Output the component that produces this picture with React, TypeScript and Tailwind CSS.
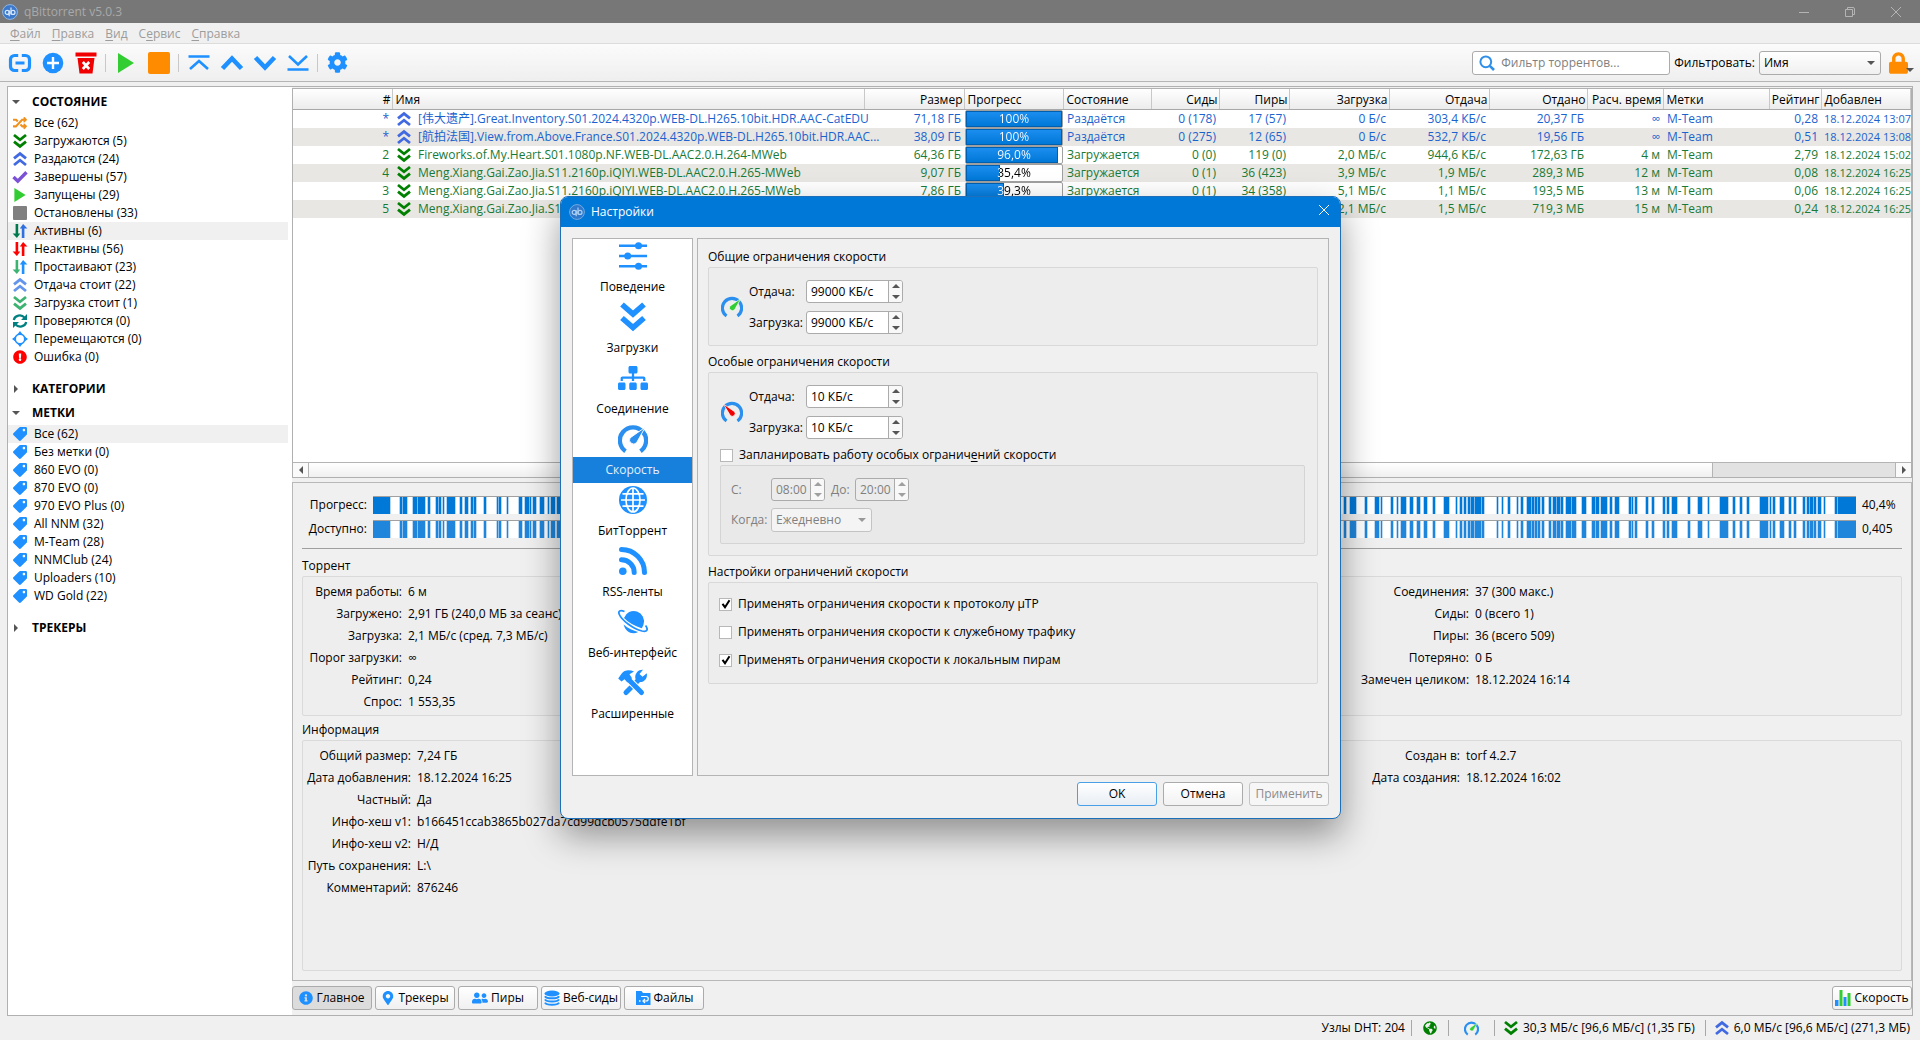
import type { ReactNode } from 'react'
import {
  FaCog,
  FaExclamationCircle,
  FaGlobeAmericas,
  FaInfoCircle,
  FaLock,
  FaMapMarkerAlt,
  FaRandom,
  FaSitemap,
  FaTag,
  FaUserFriends,
} from 'react-icons/fa'

type IconProps = { className?: string }

/* ---------- icons ---------- */

function Logo({ className }: IconProps) {
  return (
    <svg viewBox="0 0 16 16" className={className} fill="none">
      <circle cx="8" cy="8" r="7.4" fill="#3b78c9" stroke="#8fb6e6" strokeWidth="1" />
      <circle cx="5.2" cy="8.4" r="2" stroke="#d8e8fa" strokeWidth="1.2" />
      <path d="M7.2 6.2v6M9 3.6v6.8" stroke="#d8e8fa" strokeWidth="1.2" />
      <circle cx="11" cy="8.4" r="2" stroke="#d8e8fa" strokeWidth="1.2" />
    </svg>
  )
}

function DoubleChevron({ up, className }: IconProps & { up?: boolean }) {
  return (
    <svg
      viewBox="0 0 16 16"
      className={`${up ? 'rotate-180' : ''} ${className}`}
      fill="none"
      stroke="currentColor"
      strokeWidth="2.8"
    >
      <path d="M2 2l6 4.8L14 2M2 8.6l6 4.8 6-4.8" />
    </svg>
  )
}

function Arrows({ left, right }: { left: string; right: string }) {
  return (
    <svg viewBox="0 0 16 16" className="size-4">
      <path d="M3.6 1h2.6v9.500h2L4.900 15 .6 10.500h3z" fill={left} />
      <path d="M9.800 15h2.600V5.500h3L11.100 1 7.800 5.500h2z" fill={right} />
    </svg>
  )
}

function CheckMark() {
  return (
    <svg viewBox="0 0 16 16" className="size-4 text-[#7b52d6]" fill="none" stroke="currentColor" strokeWidth="3.4">
      <path d="M1.500 8l4.300 4.200L14.500 3.300" />
    </svg>
  )
}

function Sync() {
  return (
    <svg viewBox="0 0 16 16" className="size-4 text-[#008080]" fill="none" stroke="currentColor" strokeWidth="2.2">
      <path d="M1.800 7A6 5.500 0 0 1 12.500 4.600M14.200 9a6 5.500 0 0 1-10.700 2.400" />
      <path d="M15 1v6H9zM1 15V9h6z" fill="currentColor" stroke="none" />
    </svg>
  )
}

function Moving() {
  return (
    <svg viewBox="0 0 16 16" className="size-4 text-[#1e90ff]" fill="none" stroke="currentColor">
      <circle cx="8" cy="8" r="4.800" strokeWidth="1.700" />
      <path d="M8 0l2.600 3.400H5.400zM8 16l2.600-3.400H5.400zM0 8l3.400-2.600v5.200zM16 8l-3.400-2.600v5.200z" fill="currentColor" stroke="none" />
    </svg>
  )
}

function Play({ className }: IconProps) {
  return (
    <svg viewBox="0 0 16 20" className={className} fill="currentColor">
      <path d="M0 0l16 10L0 20z" />
    </svg>
  )
}

function LinkIcon() {
  return (
    <svg viewBox="0 0 24 24" className="size-6 text-[#1e90ff]" fill="none" stroke="currentColor" strokeWidth="3.200">
      <path d="M10.200 4.500H6.500a4 4 0 0 0-4 4v7a4 4 0 0 0 4 4h3.700M13.800 4.500h3.700a4 4 0 0 1 4 4v7a4 4 0 0 1-4 4h-3.700M7.500 12h9" />
    </svg>
  )
}

function AddIcon() {
  return (
    <svg viewBox="0 0 24 24" className="size-6">
      <circle cx="12" cy="12" r="10.300" fill="#1e90ff" />
      <path d="M12 6v12M6 12h12" stroke="#fff" strokeWidth="2.400" />
    </svg>
  )
}

function TrashIcon() {
  return (
    <svg viewBox="0 0 24 24" className="size-6">
      <path d="M1.500 1.500h21v4h-21zM3.500 7h17l-2 15.500h-13z" fill="#f00000" />
      <path d="M8.800 11l6.400 7M15.200 11l-6.400 7" stroke="#fff" strokeWidth="2.600" />
    </svg>
  )
}

function QueueIcon({ kind }: { kind: 'top' | 'up' | 'down' | 'bottom' }) {
  const paths = {
    top: 'M1.500 5.500h21M3 18l9-8 9 8',
    up: 'M2.500 17.500L12 7.500l9.500 10',
    down: 'M2.500 6.500L12 16.500l9.500-10',
    bottom: 'M1.500 18.500h21M3 5l9 8.500L21 5',
  }
  const heavy = kind === 'up' || kind === 'down'

  return (
    <svg viewBox="0 0 24 24" className="size-6 text-[#1e90ff]" fill="none" stroke="currentColor" strokeWidth={heavy ? 4.6 : 2.6}>
      <path d={paths[kind]} />
    </svg>
  )
}

function SearchIcon() {
  return (
    <svg viewBox="0 0 16 16" className="size-4 shrink-0 text-[#2f8fe8]" fill="none" stroke="currentColor">
      <circle cx="6.800" cy="6.800" r="5.400" strokeWidth="2" />
      <path d="M10.800 10.800l4.200 4.200" strokeWidth="2.600" />
    </svg>
  )
}

function Gauge({ needle, low, className }: IconProps & { needle: string; low?: boolean }) {
  return (
    <svg viewBox="0 0 32 32" className={className}>
      <path d="M8 29A14 14 0 1 1 24 29" fill="none" stroke="#2a8fef" strokeWidth="4.600" />
      <path
        d={low ? 'M3.500 4.500L19.800 15.500a4.200 4.200 0 0 1-6.200 5.600z' : 'M29 3.500L19.800 20a4.400 4.400 0 0 1-7-5.200z'}
        fill={needle}
        stroke="#fff"
        strokeWidth="1"
      />
    </svg>
  )
}

function Sliders() {
  return (
    <svg viewBox="0 0 32 32" className="size-8 text-[#1e90ff]" fill="currentColor">
      <path d="M2 4.500h28v2.400H2zM2 14.800h28v2.400H2zM2 25h28v2.400H2z" />
      <circle cx="21.500" cy="5.700" r="3.500" />
      <circle cx="10.700" cy="16" r="3.500" />
      <circle cx="21.500" cy="26.200" r="3.500" />
    </svg>
  )
}

function DownloadsIcon() {
  return (
    <svg viewBox="0 0 32 32" className="size-8 text-[#1e90ff]" fill="none" stroke="currentColor" strokeWidth="5.600">
      <path d="M5 3.500l11 9.500 11-9.500M5 17l11 9.500L27 17" />
    </svg>
  )
}

function GridGlobe() {
  return (
    <svg viewBox="0 0 32 32" className="size-8" fill="none" stroke="#fff" strokeWidth="1.700">
      <circle cx="16" cy="16" r="14" fill="#1e90ff" stroke="none" />
      <ellipse cx="16" cy="16" rx="7" ry="12" />
      <path d="M16 4v24M4 16h24M5.500 9.800h21M5.500 22.200h21" />
    </svg>
  )
}

function RssIcon() {
  return (
    <svg viewBox="0 0 32 32" className="size-8 text-[#1e90ff]" fill="none" stroke="currentColor" strokeWidth="5" strokeLinecap="round">
      <circle cx="5.800" cy="26.200" r="3.800" fill="currentColor" stroke="none" />
      <path d="M4.500 14.800A12.700 12.700 0 0 1 17.200 27.500M4.500 4.500a23 23 0 0 1 23 23" />
    </svg>
  )
}

function Planet() {
  return (
    <svg viewBox="0 0 32 32" className="size-8 text-[#1e90ff]" fill="none">
      <path d="M7 12a10 10 0 0 1 19.500 6.500c-.5 1.700-1 2.500-1.900 3.800C17.500 20 11.500 16.500 7 12zM6.600 18.600c4.600 4 9.500 6.200 14.500 7.400-5.500 3.200-12.600.4-14.500-7.400z" fill="currentColor" />
      <path d="M7.500 5.500C3 3.500 1 5 2.200 8.200 4.500 14 16 22.800 25 25c5.500 1.200 6.500-1.500 3.600-5.500" stroke="currentColor" strokeWidth="1.700" />
    </svg>
  )
}

function ToolsIcon() {
  return (
    <svg viewBox="0 0 32 32" className="size-8" fill="none">
      <path d="M9 25.500L22 12.500" stroke="#1e90ff" strokeWidth="5" strokeLinecap="round" />
      <path d="M29.800 6.200l-4.300 3.600-3-2.700 3.500-4.300a7.200 7.200 0 0 0-7.500 9.200l3.500 3c5 .8 8.800-3.600 7.800-8.800z" fill="#1e90ff" />
      <path d="M11.500 12.500L24.500 25.500" stroke="#fff" strokeWidth="7" strokeLinecap="round" />
      <path d="M11.500 12.500L24.500 25.500" stroke="#1e90ff" strokeWidth="5" strokeLinecap="round" />
      <path d="M1.200 11.500l3.500-5C7.500 3 12 2.500 17 4.500l-4.500 2.700 2.500 4-4.500 4.300-3-3.200-3 2.200z" fill="#1e90ff" />
    </svg>
  )
}

function DatabaseIcon() {
  return (
    <svg viewBox="0 0 16 16" className="size-4 text-[#1e90ff]" fill="none" stroke="currentColor">
      <ellipse cx="8" cy="3.500" rx="7.500" ry="3" fill="currentColor" stroke="none" />
      <path d="M1 6.200c1.500 2.800 12.500 2.800 14 0M1 9.400c1.500 2.800 12.500 2.800 14 0M1 12.600c1.500 2.800 12.500 2.800 14 0" strokeWidth="2" />
    </svg>
  )
}

function FilesIcon() {
  return (
    <svg viewBox="0 0 16 16" className="size-4" fill="none">
      <path d="M1 1h5.500l1.500 2h7.500v12H1z" fill="#1e90ff" />
      <path d="M6 6.500h5a2 2 0 0 1 0 4.500H8.500M10 9L8 11l2 2" stroke="#fff" strokeWidth="1.200" />
      <path d="M4 10.300h1.500v1.500H4z" fill="#fff" />
    </svg>
  )
}

function SpeedBars() {
  return (
    <svg viewBox="0 0 16 16" className="size-4">
      <path d="M0 10h3.500v6H0z" fill="#1e90ff" />
      <path d="M4.500 0h3v16h-3z" fill="#32cd32" />
      <path d="M8.500 7h3v9h-3z" fill="#1e90ff" />
      <path d="M12.500 3h3v13h-3z" fill="#32cd32" />
    </svg>
  )
}

function Caret({ dir = 'down', className = 'text-[#555]' }: IconProps & { dir?: 'down' | 'up' | 'left' | 'right' }) {
  const paths = {
    down: 'M0 2h8L4 6z',
    up: 'M0 6h8L4 2z',
    left: 'M6 0v8L2 4z',
    right: 'M2 0v8l4-4z',
  }

  return (
    <svg viewBox="0 0 8 8" className={`size-2 ${className}`} fill="currentColor">
      <path d={paths[dir]} />
    </svg>
  )
}

/* ---------- data ---------- */

const statusFilters: { label: string; icon: ReactNode; active?: boolean }[] = [
  { label: 'Все (62)', icon: <FaRandom className="size-3.5 text-[#f0901e]" /> },
  { label: 'Загружаются (5)', icon: <DoubleChevron className="size-4 text-[#008000]" /> },
  { label: 'Раздаются (24)', icon: <DoubleChevron up className="size-4 text-[#4169e1]" /> },
  { label: 'Завершены (57)', icon: <CheckMark /> },
  { label: 'Запущены (29)', icon: <Play className="h-3.5 w-3 text-[#32cd32]" /> },
  { label: 'Остановлены (33)', icon: <span className="size-3.5 rounded-[1px] bg-[#808080]" /> },
  { label: 'Активны (6)', icon: <Arrows left="#007a4d" right="#2f6fe0" />, active: true },
  { label: 'Неактивны (56)', icon: <Arrows left="#ff0000" right="#ff0000" /> },
  { label: 'Простаивают (23)', icon: <Arrows left="#3cb371" right="#1e90ff" /> },
  { label: 'Отдача стоит (22)', icon: <DoubleChevron up className="size-4 text-[#6495ed]" /> },
  { label: 'Загрузка стоит (1)', icon: <DoubleChevron className="size-4 text-[#3cb371]" /> },
  { label: 'Проверяются (0)', icon: <Sync /> },
  { label: 'Перемещаются (0)', icon: <Moving /> },
  { label: 'Ошибка (0)', icon: <FaExclamationCircle className="size-3.5 text-[#ff0000]" /> },
]

const tags = [
  'Все (62)',
  'Без метки (0)',
  '860 EVO (0)',
  '870 EVO (0)',
  '970 EVO Plus (0)',
  'All NNM (32)',
  'M-Team (28)',
  'NNMClub (24)',
  'Uploaders (10)',
  'WD Gold (22)',
]

type Column = { title: string; width?: string; right?: boolean }

const columns: Column[] = [
  { title: '#', width: 'w-[99px]', right: true },
  { title: 'Имя', width: 'w-[472px]' },
  { title: 'Размер', width: 'w-[100px]', right: true },
  { title: 'Прогресс', width: 'w-[99px]' },
  { title: 'Состояние', width: 'w-[88px]' },
  { title: 'Сиды', width: 'w-[68px]', right: true },
  { title: 'Пиры', width: 'w-[70px]', right: true },
  { title: 'Загрузка', width: 'w-[100px]', right: true },
  { title: 'Отдача', width: 'w-[100px]', right: true },
  { title: 'Отдано', width: 'w-[98px]', right: true },
  { title: 'Расч. время', width: 'w-[76px]', right: true },
  { title: 'Метки', width: 'w-[106px]' },
  { title: 'Рейтинг', width: 'w-[52px]', right: true },
  { title: 'Добавлен' },
]

type Torrent = {
  pos: string
  name: string
  size: string
  progress: number
  progressText: string
  seeds: string
  peers: string
  down: string
  up: string
  uploaded: string
  eta: string
  ratio: string
  added: string
}

const torrents: Torrent[] = [
  { pos: '*', name: '[伟大遗产].Great.Inventory.S01.2024.4320p.WEB-DL.H265.10bit.HDR.AAC-CatEDU', size: '71,18 ГБ', progress: 100, progressText: '100%', seeds: '0 (178)', peers: '17 (57)', down: '0 Б/с', up: '303,4 КБ/с', uploaded: '20,37 ГБ', eta: '∞', ratio: '0,28', added: '18.12.2024 13:07' },
  { pos: '*', name: '[航拍法国].View.from.Above.France.S01.2024.4320p.WEB-DL.H265.10bit.HDR.AAC...', size: '38,09 ГБ', progress: 100, progressText: '100%', seeds: '0 (275)', peers: '12 (65)', down: '0 Б/с', up: '532,7 КБ/с', uploaded: '19,56 ГБ', eta: '∞', ratio: '0,51', added: '18.12.2024 13:08' },
  { pos: '2', name: 'Fireworks.of.My.Heart.S01.1080p.NF.WEB-DL.AAC2.0.H.264-MWeb', size: '64,36 ГБ', progress: 96, progressText: '96,0%', seeds: '0 (0)', peers: '119 (0)', down: '2,0 МБ/с', up: '944,6 КБ/с', uploaded: '172,63 ГБ', eta: '4 м', ratio: '2,79', added: '18.12.2024 15:02' },
  { pos: '4', name: 'Meng.Xiang.Gai.Zao.Jia.S11.2160p.iQIYI.WEB-DL.AAC2.0.H.265-MWeb', size: '9,07 ГБ', progress: 35.4, progressText: '35,4%', seeds: '0 (1)', peers: '36 (423)', down: '3,9 МБ/с', up: '1,9 МБ/с', uploaded: '289,3 МБ', eta: '12 м', ratio: '0,08', added: '18.12.2024 16:25' },
  { pos: '3', name: 'Meng.Xiang.Gai.Zao.Jia.S11.2160p.iQIYI.WEB-DL.AAC2.0.H.265-MWeb', size: '7,86 ГБ', progress: 39.3, progressText: '39,3%', seeds: '0 (1)', peers: '34 (358)', down: '5,1 МБ/с', up: '1,1 МБ/с', uploaded: '193,5 МБ', eta: '13 м', ratio: '0,06', added: '18.12.2024 16:25' },
  { pos: '5', name: 'Meng.Xiang.Gai.Zao.Jia.S11.2160p.iQIYI.WEB-DL.AAC2.0.H.265-MWeb', size: '7,24 ГБ', progress: 40.4, progressText: '40,4%', seeds: '0 (1)', peers: '36 (509)', down: '2,1 МБ/с', up: '1,5 МБ/с', uploaded: '719,3 МБ', eta: '15 м', ratio: '0,24', added: '18.12.2024 16:25' },
]

// [start, end] of every run of finished pieces
const pieces = [
  [0, 17], [27, 29], [30, 34], [40, 44], [45, 52], [55, 57], [63, 65], [66, 68], [70, 71], [74, 82], [87, 89],
  [92, 95], [98, 100], [101, 103], [111, 113], [124, 125], [126, 128], [134, 135], [146, 149], [152, 156],
  [157, 158], [160, 163], [167, 171], [175, 176], [178, 182], [184, 187],
  [971, 973], [977, 983], [992, 994], [1002, 1006], [1008, 1009], [1018, 1020], [1024, 1025], [1028, 1033],
  [1037, 1040], [1044, 1047], [1051, 1054], [1060, 1062], [1071, 1076], [1083, 1084], [1087, 1089], [1091, 1093],
  [1095, 1097], [1098, 1101], [1102, 1108], [1109, 1111], [1124, 1125], [1129, 1130], [1135, 1137], [1144, 1145],
  [1148, 1150], [1154, 1158], [1159, 1161], [1162, 1164], [1165, 1167], [1169, 1171], [1176, 1178], [1180, 1183],
  [1184, 1187], [1188, 1190], [1193, 1198], [1199, 1203], [1209, 1213], [1219, 1222], [1223, 1226], [1228, 1234],
  [1237, 1239], [1242, 1246], [1256, 1258], [1259, 1260], [1262, 1264], [1273, 1275], [1279, 1281], [1290, 1292],
  [1294, 1296], [1299, 1304], [1315, 1317], [1325, 1329], [1335, 1336], [1347, 1355], [1360, 1362], [1367, 1369],
  [1374, 1376], [1387, 1395], [1397, 1398], [1400, 1402], [1407, 1411], [1416, 1418], [1421, 1423], [1430, 1432],
  [1434, 1436], [1437, 1440], [1441, 1443], [1445, 1448], [1451, 1452], [1462, 1464], [1465, 1483],
]

const settingsPages: { label: string; icon: ReactNode; active?: boolean }[] = [
  { label: 'Поведение', icon: <Sliders /> },
  { label: 'Загрузки', icon: <DownloadsIcon /> },
  { label: 'Соединение', icon: <FaSitemap className="size-[30px] text-[#1e90ff]" /> },
  { label: 'Скорость', icon: <Gauge needle="#2a8fef" className="size-[30px]" />, active: true },
  { label: 'БитТоррент', icon: <GridGlobe /> },
  { label: 'RSS-ленты', icon: <RssIcon /> },
  { label: 'Веб-интерфейс', icon: <Planet /> },
  { label: 'Расширенные', icon: <ToolsIcon /> },
]

/* ---------- main window ---------- */

function TitleBar() {
  return (
    <header className="flex h-[23px] items-center bg-[#777] pl-0.5 text-[#a9a9a9]">
      <Logo className="size-4" />
      <h1 className="ml-1.5 flex-1">qBittorrent v5.0.3</h1>
      <div className="flex h-full items-center text-[#b4b4b4]">
        <button type="button" aria-label="Свернуть" className="flex w-[46px] justify-center">
          <svg viewBox="0 0 10 10" className="size-2.5" stroke="currentColor"><path d="M0 5.500h10" /></svg>
        </button>
        <button type="button" aria-label="Развернуть" className="flex w-[45px] justify-center">
          <svg viewBox="0 0 10 10" className="size-2.5" fill="none" stroke="currentColor">
            <path d="M.5 2.500h7v7h-7zM2.500 2.500v-2h5.500a1.500 1.500 0 0 1 1.500 1.500v5.500h-2" />
          </svg>
        </button>
        <button type="button" aria-label="Закрыть" className="flex w-12 justify-center">
          <svg viewBox="0 0 10 10" className="size-2.5" stroke="currentColor"><path d="M0 0l10 10M10 0L0 10" /></svg>
        </button>
      </div>
    </header>
  )
}

function MenuBar() {
  const items = [
    ['', 'Ф', 'айл'],
    ['', 'П', 'равка'],
    ['', 'В', 'ид'],
    ['С', 'е', 'рвис'],
    ['', 'С', 'правка'],
  ]

  return (
    <nav className="flex h-[21px] items-center gap-[11px] border-b border-[#dcdcdc] bg-[#f0f0f0] pt-px pl-2.5 text-[#9c9c9c]">
      {items.map(([before, key, after]) => (
        <button key={key + after} type="button">
          {before}
          <span className="underline underline-offset-2">{key}</span>
          {after}
        </button>
      ))}
    </nav>
  )
}

function ToolButton({ label, children }: { label: string; children: ReactNode }) {
  return (
    <button type="button" aria-label={label} className="flex w-[33px] items-center justify-center">
      {children}
    </button>
  )
}

function ToolSeparator() {
  return <span className="mx-[3px] h-[18px] w-px bg-[#c8c8c8]" />
}

function Toolbar() {
  return (
    <div className="flex h-[38px] items-center border-b border-[#b4b4b4] bg-linear-to-b from-[#fbfbfb] to-[#efefef] pl-[3px]">
      <ToolButton label="Добавить ссылку"><LinkIcon /></ToolButton>
      <ToolButton label="Добавить торрент"><AddIcon /></ToolButton>
      <ToolButton label="Удалить"><TrashIcon /></ToolButton>
      <ToolSeparator />
      <ToolButton label="Запустить"><Play className="h-5 w-[18px] text-[#32cd32]" /></ToolButton>
      <ToolButton label="Остановить"><span className="size-[22px] rounded-xs bg-[#ff8c00]" /></ToolButton>
      <ToolSeparator />
      <ToolButton label="В начало"><QueueIcon kind="top" /></ToolButton>
      <ToolButton label="Выше"><QueueIcon kind="up" /></ToolButton>
      <ToolButton label="Ниже"><QueueIcon kind="down" /></ToolButton>
      <ToolButton label="В конец"><QueueIcon kind="bottom" /></ToolButton>
      <ToolSeparator />
      <ToolButton label="Настройки"><FaCog className="size-[21px] text-[#1e90ff]" /></ToolButton>

      <div className="ml-auto flex h-6 w-[198px] items-center rounded-[3px] border border-[#ababab] bg-white pl-1.5">
        <SearchIcon />
        <input
          type="text"
          aria-label="Фильтр торрентов"
          placeholder="Фильтр торрентов..."
          className="ml-1.5 w-full min-w-0 bg-transparent outline-none placeholder:text-[#808080]"
        />
      </div>
      <label htmlFor="filter-by" className="mx-1 whitespace-nowrap">Фильтровать:</label>
      <div className="relative">
        <select
          id="filter-by"
          className="h-6 w-[122px] appearance-none rounded-[3px] border border-[#ababab] bg-linear-to-b from-white to-[#f0f0f0] pl-1"
        >
          <option>Имя</option>
        </select>
        <Caret className="pointer-events-none absolute top-2 right-1.5 text-[#555]" />
      </div>
      <button type="button" aria-label="Заблокировать" className="mr-1.5 ml-2 flex items-end">
        <FaLock className="h-[22px] w-[19px] text-[#ff8c00]" />
        <Caret className="-ml-0.5 size-1.5 text-[#555]" />
      </button>
    </div>
  )
}

function SidebarHeading({ open, children }: { open?: boolean; children: string }) {
  return (
    <button type="button" className="flex h-6 w-full items-center gap-3 pt-px pl-1 font-bold">
      <Caret dir={open ? 'down' : 'right'} />
      {children}
    </button>
  )
}

function SidebarItem({ icon, active, children }: { icon: ReactNode; active?: boolean; children: string }) {
  return (
    <li>
      <button type="button" className={`flex h-[18px] w-full items-center gap-1.5 pl-1 ${active ? 'bg-[#f0f0f0]' : ''}`}>
        <span className="flex size-4 items-center justify-center">{icon}</span>
        {children}
      </button>
    </li>
  )
}

function Sidebar() {
  return (
    <aside className="w-[284px] shrink-0 bg-white pt-0.5 pr-1">
      <SidebarHeading open>СОСТОЯНИЕ</SidebarHeading>
      <ul className="pt-px">
        {statusFilters.map((f) => (
          <SidebarItem key={f.label} icon={f.icon} active={f.active}>{f.label}</SidebarItem>
        ))}
      </ul>
      <div className="pt-2.5">
        <SidebarHeading>КАТЕГОРИИ</SidebarHeading>
        <SidebarHeading open>МЕТКИ</SidebarHeading>
      </div>
      <ul className="pt-px">
        {tags.map((tag, i) => (
          <SidebarItem key={tag} icon={<FaTag className="size-3.5 -scale-x-100 text-[#1e90ff]" />} active={i === 0}>
            {tag}
          </SidebarItem>
        ))}
      </ul>
      <div className="pt-2.5">
        <SidebarHeading>ТРЕКЕРЫ</SidebarHeading>
      </div>
    </aside>
  )
}

function ProgressCell({ value, text }: { value: number; text: string }) {
  return (
    <div className="ml-px h-[18px] rounded-[2px] border border-[#a0a0a0] bg-white">
      <div
        className="h-full border border-[#005fae] bg-linear-to-b from-[#1a8ef0] to-[#0078d7]"
        style={{ width: `${value}%` }}
      />
      <div
        className="-mt-4 bg-clip-text text-center leading-4 text-transparent"
        style={{ backgroundImage: `linear-gradient(to right, #fff ${value}%, #000 ${value}%)` }}
      >
        {text}
      </div>
    </div>
  )
}

function TorrentTable() {
  return (
    <table className="w-full table-fixed border-collapse whitespace-nowrap">
      <thead>
        <tr className="h-5 bg-linear-to-b from-white to-[#ececec]">
          {columns.map((c) => (
            <th
              key={c.title}
              className={`border-r border-b border-r-[#c8c8c8] border-b-[#a8a8a8] p-0 pt-0.5 font-normal ${c.width ?? ''} ${
                c.right ? 'pr-px text-right' : 'pl-[3px] text-left'
              }`}
            >
              {c.title}
            </th>
          ))}
        </tr>
      </thead>
      <tbody>
        {torrents.map((t, i) => {
          const seeding = t.progress === 100

          return (
            <tr
              key={i}
              className={`h-[18px] leading-[18px] ${i % 2 ? 'bg-[#e9e7e3]' : 'bg-white'} ${
                seeding ? 'text-[#1a63cf]' : 'text-[#187a36]'
              }`}
            >
              <td className="p-0 pr-[3px] text-right">{t.pos}</td>
              <td className="p-0 pl-1">
                <div className="flex items-center gap-1.5">
                  <DoubleChevron
                    up={seeding}
                    className={`size-4 shrink-0 ${seeding ? 'text-[#4169e1]' : 'text-[#008000]'}`}
                  />
                  <span>{t.name}</span>
                </div>
              </td>
              <td className="p-0 pr-[3px] text-right">{t.size}</td>
              <td className="p-0"><ProgressCell value={t.progress} text={t.progressText} /></td>
              <td className="p-0 pl-1">{seeding ? 'Раздаётся' : 'Загружается'}</td>
              <td className="p-0 pr-[3px] text-right">{t.seeds}</td>
              <td className="p-0 pr-[3px] text-right">{t.peers}</td>
              <td className="p-0 pr-[3px] text-right">{t.down}</td>
              <td className="p-0 pr-[3px] text-right">{t.up}</td>
              <td className="p-0 pr-[3px] text-right">{t.uploaded}</td>
              <td className="p-0 pr-[3px] text-right">{t.eta}</td>
              <td className="p-0 pl-1">M-Team</td>
              <td className="p-0 pr-[3px] text-right">{t.ratio}</td>
              <td className="p-0 pl-[3px] text-[11px]">{t.added}</td>
            </tr>
          )
        })}
      </tbody>
    </table>
  )
}

function TransferList() {
  return (
    <section className="flex h-[390px] shrink-0 flex-col border border-[#b0b0b0] bg-white">
      <div className="flex-1 overflow-hidden">
        <TorrentTable />
      </div>
      <div className="flex h-[15px] border-t border-[#b4b4b4] bg-[#e2e2e2]">
        <button type="button" aria-label="Влево" className="flex w-4 items-center justify-center border-r border-[#b4b4b4] bg-[#fafafa]">
          <Caret dir="left" />
        </button>
        <div className="flex-1">
          <div className="h-full w-[88.5%] border-r border-[#b4b4b4] bg-linear-to-b from-white to-[#f0f0f0]" />
        </div>
        <button type="button" aria-label="Вправо" className="flex w-4 items-center justify-center border-l border-[#b4b4b4] bg-[#fafafa]">
          <Caret dir="right" />
        </button>
      </div>
    </section>
  )
}

function PieceBar({ label, value, fill }: { label: string; value: string; fill: string }) {
  return (
    <div className="flex h-[18px] items-center gap-1.5">
      <span className="w-[65px] text-right">{label}</span>
      <svg viewBox="0 0 1483 18" preserveAspectRatio="none" className="h-[18px] min-w-0 flex-1" fill={fill} shapeRendering="crispEdges">
        <path d="M0 0h1483v18H0z" fill="#fff" />
        {pieces.map(([start, end]) => (
          <g key={start}>
            <rect x={start - 1} y="1" width={end - start + 2} height="17" opacity="0.3" />
            <rect x={start} y="1" width={end - start} height="17" />
          </g>
        ))}
        <path d="M0 0h1483v1H0z" fill="#a0a0a0" />
      </svg>
      <span className="w-10">{value}</span>
    </div>
  )
}

function InfoColumn({ rows, labelWidth }: { rows: string[][]; labelWidth: string }) {
  return (
    <dl className="min-w-0 leading-[22px]">
      {rows.map(([label, value]) => (
        <div key={label} className="flex gap-1.5 whitespace-nowrap">
          <dt className={`text-right ${labelWidth}`}>{label}</dt>
          <dd>{value}</dd>
        </div>
      ))}
    </dl>
  )
}

function DetailsPanel() {
  return (
    <section className="mt-1 flex flex-1 flex-col border border-[#b8b8b8] bg-[#f0f0f0] px-[9px] pt-[13px] pb-[9px]">
      <div className="flex flex-col gap-1.5">
        <PieceBar label="Прогресс:" value="40,4%" fill="#0078d7" />
        <PieceBar label="Доступно:" value="0,405" fill="#2086db" />
      </div>
      <hr className="mt-2.5 border-[#a0a0a0]" />
      <h2 className="mt-[7px] h-5 leading-5">Торрент</h2>
      <div className="grid h-[140px] grid-cols-[1058px_1fr] rounded-xs border border-[#dadada] bg-[#eeeeee] pt-1">
        <InfoColumn
          labelWidth="w-[99px]"
          rows={[
            ['Время работы:', '6 м'],
            ['Загружено:', '2,91 ГБ (240,0 МБ за сеанс)'],
            ['Загрузка:', '2,1 МБ/с (сред. 7,3 МБ/с)'],
            ['Порог загрузки:', '∞'],
            ['Рейтинг:', '0,24'],
            ['Спрос:', '1 553,35'],
          ]}
        />
        <InfoColumn
          labelWidth="w-[108px]"
          rows={[
            ['Соединения:', '37 (300 макс.)'],
            ['Сиды:', '0 (всего 1)'],
            ['Пиры:', '36 (всего 509)'],
            ['Потеряно:', '0 Б'],
            ['Замечен целиком:', '18.12.2024 16:14'],
          ]}
        />
      </div>
      <h2 className="mt-1 h-5 leading-5">Информация</h2>
      <div className="grid flex-1 grid-cols-[1058px_1fr] rounded-xs border border-[#dadada] bg-[#eeeeee] pt-1">
        <InfoColumn
          labelWidth="w-[108px]"
          rows={[
            ['Общий размер:', '7,24 ГБ'],
            ['Дата добавления:', '18.12.2024 16:25'],
            ['Частный:', 'Да'],
            ['Инфо-хеш v1:', 'b166451ccab3865b027da7cd99dcb0575ddfe1bf'],
            ['Инфо-хеш v2:', 'Н/Д'],
            ['Путь сохранения:', 'L:\\'],
            ['Комментарий:', '876246'],
          ]}
        />
        <InfoColumn
          labelWidth="w-[99px]"
          rows={[
            ['Создан в:', 'torf 4.2.7'],
            ['Дата создания:', '18.12.2024 16:02'],
          ]}
        />
      </div>
    </section>
  )
}

function TabButton({ icon, active, children }: { icon: ReactNode; active?: boolean; children: string }) {
  return (
    <button
      type="button"
      className={`flex h-6 w-20 items-center justify-center gap-[3px] rounded-[3px] border border-[#ababab] whitespace-nowrap ${
        active ? 'bg-[#dcdcdc]' : 'bg-linear-to-b from-white to-[#f0f0f0]'
      }`}
    >
      {icon}
      {children}
    </button>
  )
}

function DetailsTabs() {
  return (
    <div className="flex h-[34px] items-center gap-[3px]">
      <TabButton active icon={<FaInfoCircle className="size-3.5 text-[#1e90ff]" />}>Главное</TabButton>
      <TabButton icon={<FaMapMarkerAlt className="size-3.5 text-[#1e90ff]" />}>Трекеры</TabButton>
      <TabButton icon={<FaUserFriends className="size-4 text-[#1e90ff]" />}>Пиры</TabButton>
      <TabButton icon={<DatabaseIcon />}>Веб-сиды</TabButton>
      <TabButton icon={<FilesIcon />}>Файлы</TabButton>
      <div className="ml-auto">
        <TabButton icon={<SpeedBars />}>Скорость</TabButton>
      </div>
    </div>
  )
}

function StatusBar() {
  const separator = <span className="h-4 w-px bg-[#a8a8a8]" />

  return (
    <footer className="flex h-6 items-center justify-end bg-[#f0f0f0] pr-2.5 whitespace-nowrap">
      <span className="mr-1.5">Узлы DHT: 204</span>
      {separator}
      <FaGlobeAmericas className="mx-[11px] size-3.5 text-[#008000]" />
      {separator}
      <Gauge needle="#32cd32" className="mx-[15px] size-[15px]" />
      {separator}
      <DoubleChevron className="ml-2 size-4 text-[#008000]" />
      <span className="mr-2.5 ml-1">30,3 МБ/с [96,6 МБ/с] (1,35 ГБ)</span>
      {separator}
      <DoubleChevron up className="ml-2 size-4 text-[#4169e1]" />
      <span className="ml-1">6,0 МБ/с [96,6 МБ/с] (271,3 МБ)</span>
    </footer>
  )
}

/* ---------- settings dialog ---------- */

type SpinProps = { id: string; value: string; width: string; disabled?: boolean }

function SpinBox({ id, value, width, disabled }: SpinProps) {
  const caret = disabled ? 'text-[#a0a0a0]' : 'text-[#555]'

  return (
    <div
      className={`flex h-[23px] overflow-hidden rounded-[3px] border border-[#ababab] ${width} ${
        disabled ? 'bg-[#ececec] text-[#808080]' : 'bg-white'
      }`}
    >
      <input id={id} type="text" defaultValue={value} disabled={disabled} className="min-w-0 flex-1 pl-1 outline-none" />
      <div className="flex w-3.5 shrink-0 flex-col border-l border-[#ababab] bg-[#f8f8f8]">
        <button type="button" aria-label="Больше" disabled={disabled} className="flex flex-1 items-center justify-center">
          <Caret dir="up" className={caret} />
        </button>
        <button type="button" aria-label="Меньше" disabled={disabled} className="flex flex-1 items-center justify-center">
          <Caret className={caret} />
        </button>
      </div>
    </div>
  )
}

function CheckBox({ checked, children }: { checked?: boolean; children: ReactNode }) {
  return (
    <label className="flex h-5 w-fit items-center gap-1.5 whitespace-nowrap">
      <span className="grid size-[13px] place-items-center">
        <input
          type="checkbox"
          defaultChecked={checked}
          className="peer col-start-1 row-start-1 size-[13px] appearance-none border border-[#b8b8b8] bg-white"
        />
        <svg
          viewBox="0 0 12 12"
          className="pointer-events-none invisible col-start-1 row-start-1 size-3 peer-checked:visible"
          fill="none"
          stroke="#000"
          strokeWidth="2"
        >
          <path d="M2.500 5.800l2.500 3.400 4.500-7" />
        </svg>
      </span>
      <span>{children}</span>
    </label>
  )
}

function SpeedLimits({ prefix, value, gauge }: { prefix: string; value: string; gauge: ReactNode }) {
  return (
    <div className="flex items-center gap-1.5 pl-3">
      {gauge}
      <div className="grid grid-cols-[57px_97px] items-center gap-y-2">
        <label htmlFor={`${prefix}-up`}>Отдача:</label>
        <SpinBox id={`${prefix}-up`} value={value} width="w-[97px]" />
        <label htmlFor={`${prefix}-down`}>Загрузка:</label>
        <SpinBox id={`${prefix}-down`} value={value} width="w-[97px]" />
      </div>
    </div>
  )
}

function GroupBox({ title, className, children }: { title: string; className: string; children: ReactNode }) {
  return (
    <fieldset>
      <legend className="h-5 leading-5">{title}</legend>
      <div className={`rounded-xs border border-[#d8d8d8] bg-[#ededed] ${className}`}>{children}</div>
    </fieldset>
  )
}

function SettingsNav() {
  return (
    <nav className="w-[121px] border border-[#b4b4b4] bg-white">
      {settingsPages.map((page) => (
        <button key={page.label} type="button" className="block w-full text-center">
          <span className="flex h-[35px] items-center justify-center pb-0.5">{page.icon}</span>
          <span className={`block h-[26px] leading-[26px] ${page.active ? 'bg-[#1680dc] text-[#e4f1fc]' : ''}`}>
            {page.label}
          </span>
        </button>
      ))}
    </nav>
  )
}

function SpeedPage() {
  return (
    <div className="flex flex-1 flex-col gap-1.5 border border-[#b4b4b4] px-2.5 pt-2">
      <GroupBox title="Общие ограничения скорости" className="h-[79px] pt-3">
        <SpeedLimits prefix="global" value="99000 КБ/с" gauge={<Gauge needle="#32cd32" className="size-[22px]" />} />
      </GroupBox>

      <GroupBox title="Особые ограничения скорости" className="h-[184px] pt-3">
        <SpeedLimits prefix="alt" value="10 КБ/с" gauge={<Gauge low needle="#f00000" className="size-[22px]" />} />
        <div className="mt-1.5 pr-3 pl-[11px]">
          <CheckBox>
            Запланировать работу особых огранич<span className="underline underline-offset-2">е</span>ний скорости
          </CheckBox>
          <div className="grid h-[79px] grid-cols-[40px_1fr] content-start items-center gap-y-[7px] rounded-xs border border-[#d4d4d4] bg-[#e9e9e9] pt-3 pl-2.5 text-[#808080]">
            <label htmlFor="time-from">С:</label>
            <div className="flex items-center gap-1.5">
              <SpinBox id="time-from" value="08:00" width="w-[54px]" disabled />
              <label htmlFor="time-to" className="w-[18px] whitespace-nowrap">До:</label>
              <SpinBox id="time-to" value="20:00" width="w-[54px]" disabled />
            </div>
            <label htmlFor="when">Когда:</label>
            <div className="relative w-fit">
              <select
                id="when"
                disabled
                className="h-6 w-[101px] appearance-none rounded-[3px] border border-[#c4c4c4] bg-[#f4f4f4] pl-1 opacity-100"
              >
                <option>Ежедневно</option>
              </select>
              <Caret className="pointer-events-none absolute top-2 right-1.5 text-[#999]" />
            </div>
          </div>
        </div>
      </GroupBox>

      <GroupBox title="Настройки ограничений скорости" className="flex h-[102px] flex-col gap-2 pt-[11px] pl-2.5">
        <CheckBox checked>Применять ограничения скорости к протоколу µTP</CheckBox>
        <CheckBox>Применять ограничения скорости к служебному трафику</CheckBox>
        <CheckBox checked>Применять ограничения скорости к локальным пирам</CheckBox>
      </GroupBox>
    </div>
  )
}

function SettingsDialog() {
  return (
    <div
      role="dialog"
      aria-labelledby="settings-title"
      className="absolute top-[196px] left-[560px] w-[781px] overflow-hidden rounded-lg border border-[#1c6fb8] bg-[#f0f0f0] shadow-[0_16px_36px_rgba(0,0,0,0.4)]"
    >
      <div className="flex h-[30px] items-center bg-[#0078d7] pr-2.5 pl-2 text-white">
        <Logo className="size-4 opacity-80" />
        <h2 id="settings-title" className="ml-1.5 flex-1">Настройки</h2>
        <button type="button" aria-label="Закрыть" className="mb-1 p-px">
          <svg viewBox="0 0 10 10" className="size-2.5" stroke="currentColor"><path d="M0 0l10 10M10 0L0 10" /></svg>
        </button>
      </div>
      <div className="flex h-[549px] gap-1 px-[11px] pt-[11px]">
        <SettingsNav />
        <SpeedPage />
      </div>
      <div className="flex gap-1.5 px-[11px] pt-1.5 pb-3">
        <button type="button" className="ml-auto h-6 w-20 rounded-[3px] border border-[#4aa0e6] bg-linear-to-b from-white to-[#e8eef4]">
          OK
        </button>
        <button type="button" className="h-6 w-20 rounded-[3px] border border-[#ababab] bg-linear-to-b from-white to-[#f2f2f2]">
          Отмена
        </button>
        <button type="button" disabled className="h-6 w-20 rounded-[3px] border border-[#c4c4c4] bg-[#f6f6f6] text-[#8c8c8c]">
          Применить
        </button>
      </div>
    </div>
  )
}

export default function App() {
  return (
    <div className="relative flex min-h-screen flex-col bg-[#f0f0f0] font-['Open_Sans','Noto_Sans_CJK_SC',sans-serif] text-[12px] leading-4 text-black">
      <TitleBar />
      <MenuBar />
      <Toolbar />
      <main className="mx-[7px] mt-1 flex flex-1 border border-[#b0b0b0]">
        <Sidebar />
        <div className="flex min-w-0 flex-1 flex-col pt-px">
          <TransferList />
          <DetailsPanel />
          <DetailsTabs />
        </div>
      </main>
      <StatusBar />
      <SettingsDialog />
    </div>
  )
}
